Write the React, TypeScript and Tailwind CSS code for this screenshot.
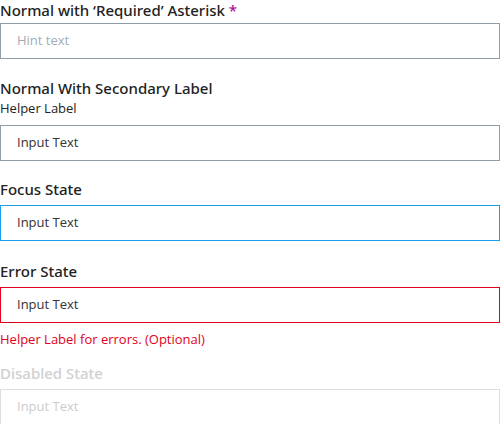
const font = { fontFamily: '"Open Sans", "Noto Sans", sans-serif' };

function Label({ children, disabled }: { children: React.ReactNode; disabled?: boolean }) {
  return (
    <div
      className={`font-['Noto_Sans',sans-serif] text-[15px] font-medium leading-5 ${disabled ? "text-[#d0d0d0]" : "text-[#222222]"}`}
    >
      {children}
    </div>
  );
}

function Field({
  value,
  placeholder,
  border,
  textColor = "text-[#333333]",
}: {
  value?: string;
  placeholder?: string;
  border: string;
  textColor?: string;
}) {
  return (
    <div className={`flex h-[36px] w-full items-center border px-4 text-[13px] ${border}`}>
      {value ? (
        <span className={textColor}>{value}</span>
      ) : (
        <span className="text-[#a3adb8]">{placeholder}</span>
      )}
    </div>
  );
}

export default function App() {
  return (
    <div className="flex w-[500px] flex-col bg-white" style={font}>
      <Label>
        Normal with ‘Required’ Asterisk <span className="text-[#b3109d]">*</span>
      </Label>
      <div className="mt-[3px]">
        <Field placeholder="Hint text" border="border-[#8e9ea9]" />
      </div>

      <div className="mt-[19px]">
        <Label>Normal With Secondary Label</Label>
        <div className="text-[13px] leading-5 text-[#222222]">Helper Label</div>
        <div className="mt-[7px]">
          <Field value="Input Text" border="border-[#8e9ea9]" />
        </div>
      </div>

      <div className="mt-[18px]">
        <Label>Focus State</Label>
        <div className="mt-[6px]">
          <Field value="Input Text" border="border-[#1a9ee8]" />
        </div>
      </div>

      <div className="mt-[20px]">
        <Label>Error State</Label>
        <div className="mt-[6px]">
          <Field value="Input Text" border="border-[#e0001b]" />
        </div>
        <div className="mt-[6px] text-[13px] leading-5 text-[#e0001b]">
          Helper Label for errors. (Optional)
        </div>
      </div>

      <div className="mt-[14px]">
        <Label disabled>Disabled State</Label>
        <div className="mt-[6px]">
          <Field value="Input Text" border="border-[#dddddd]" textColor="text-[#cccccc]" />
        </div>
      </div>
    </div>
  );
}
